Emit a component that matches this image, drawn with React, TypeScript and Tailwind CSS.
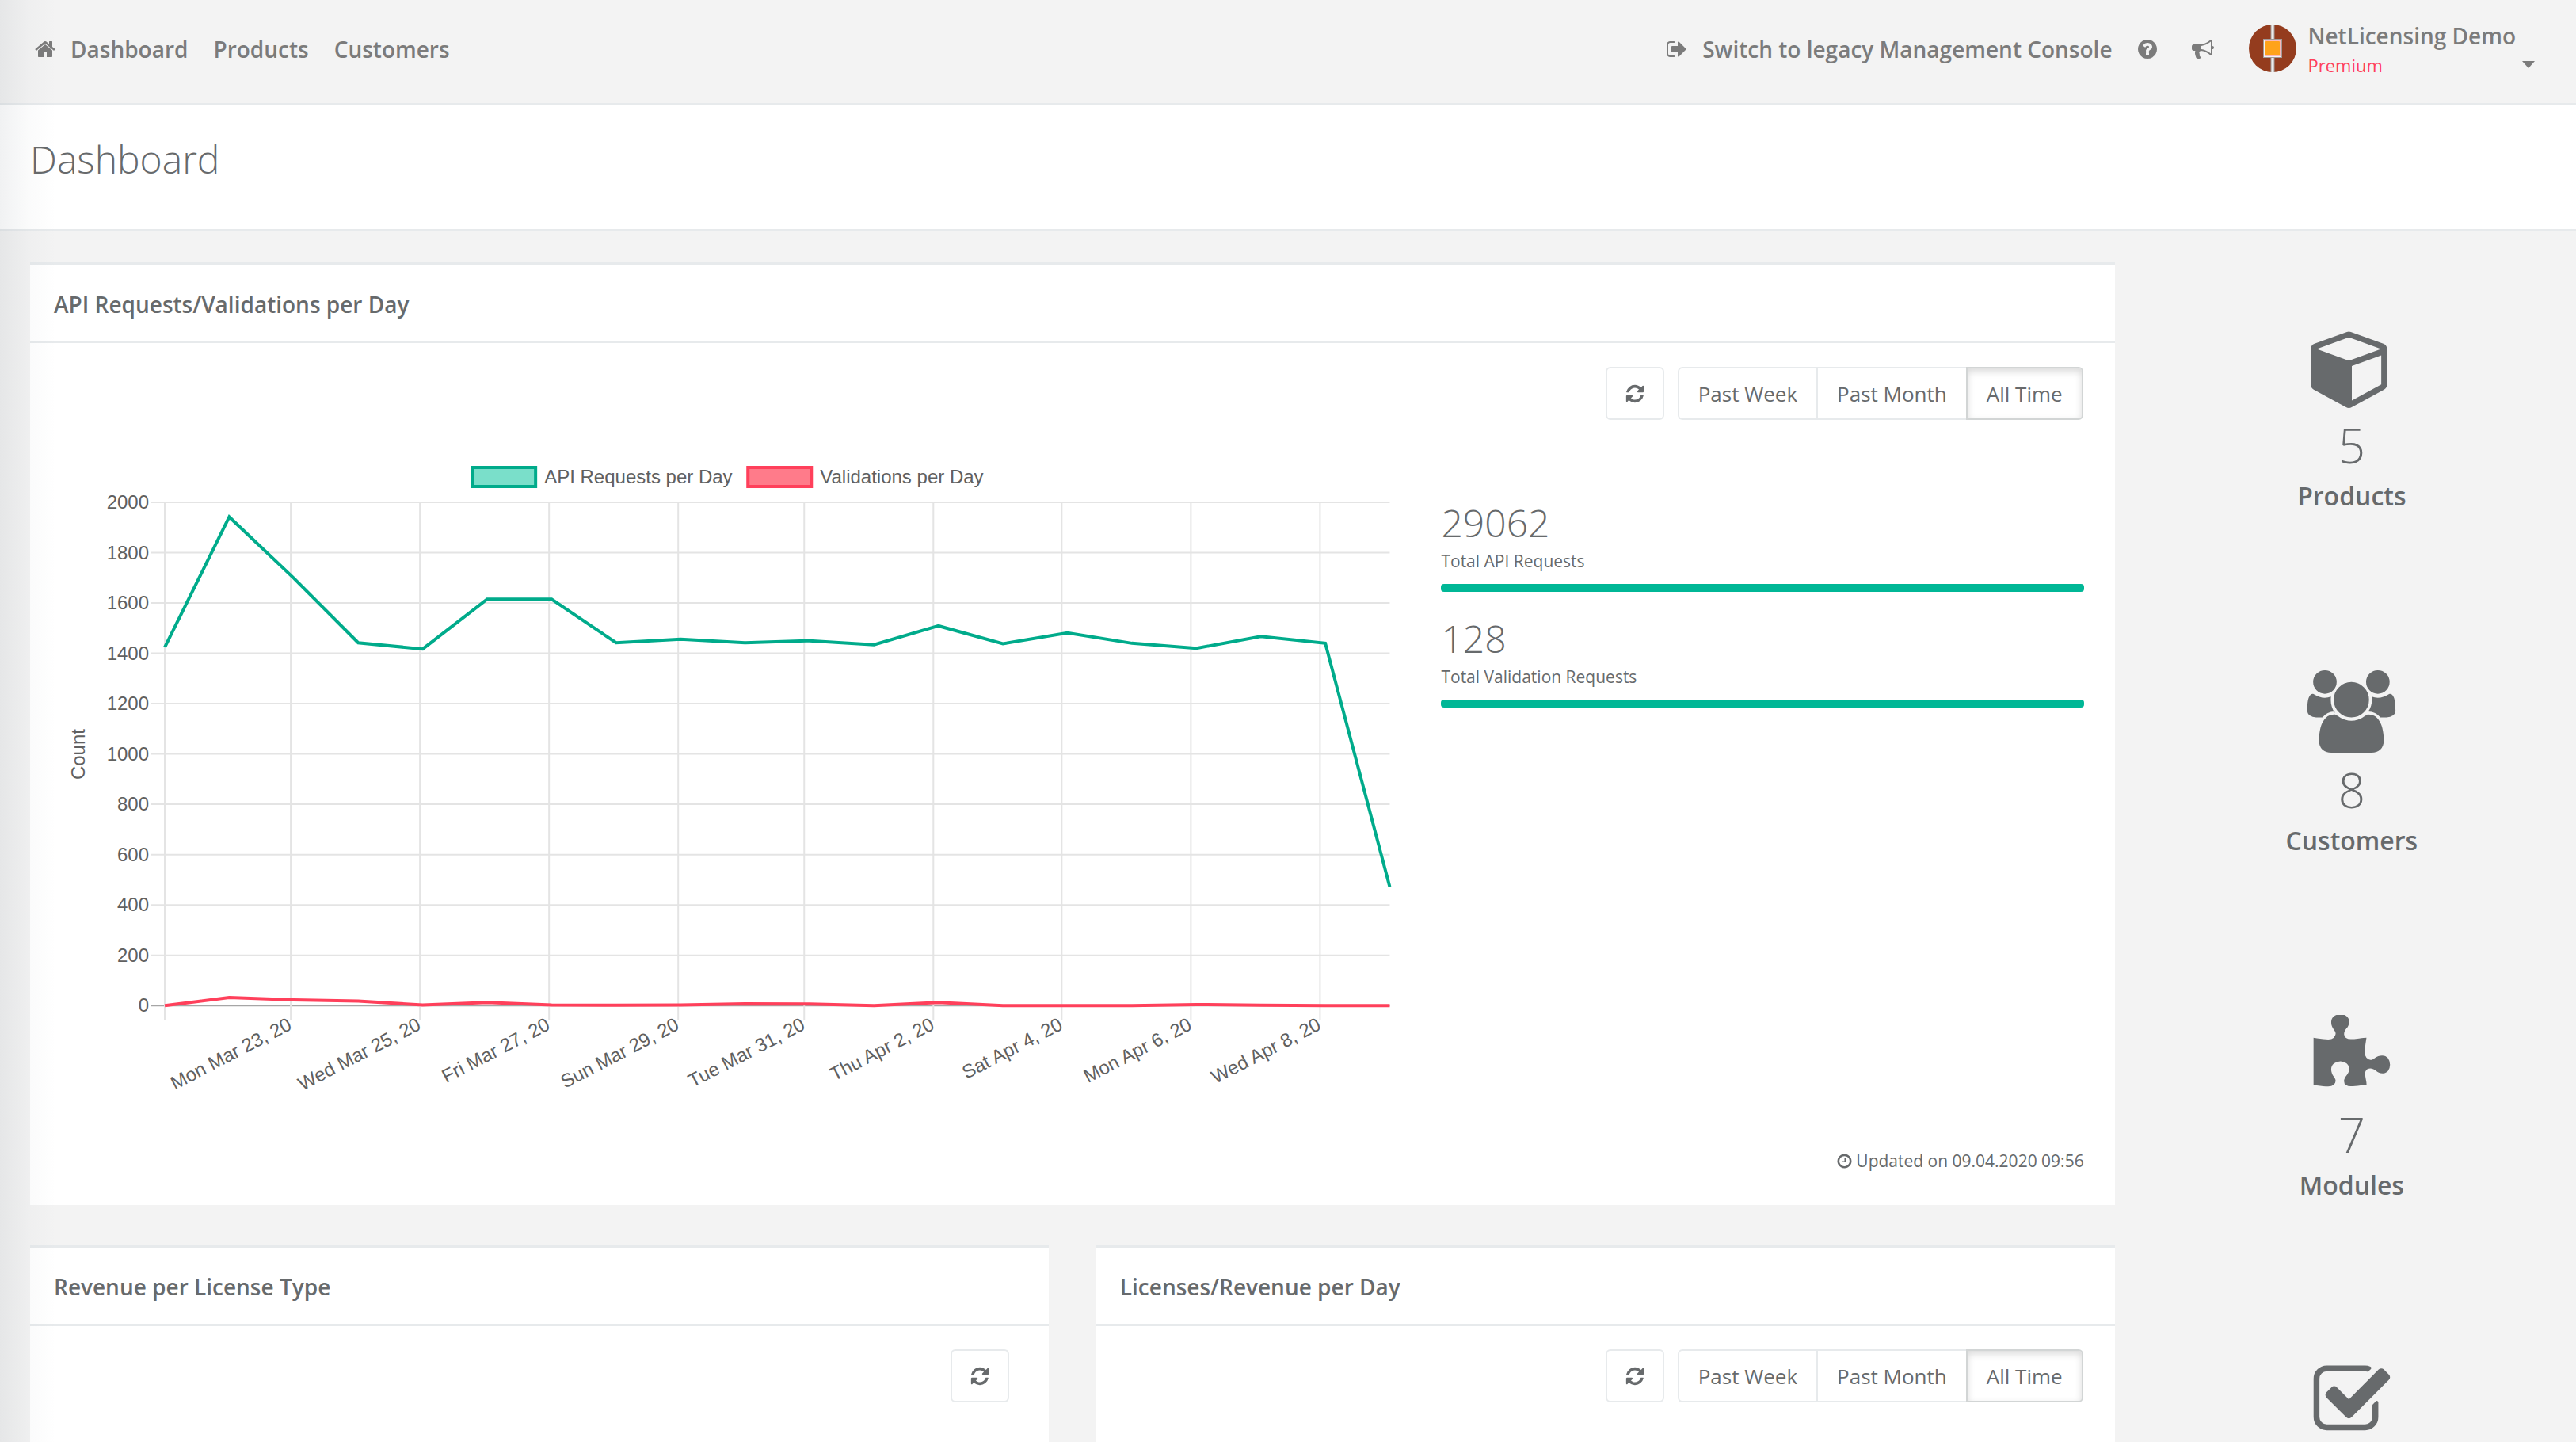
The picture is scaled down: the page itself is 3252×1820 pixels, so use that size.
import React from "react";

const icons = {
  home: "M1408 992v480q0 26-19 45t-45 19h-384v-384h-256v384h-384q-26 0-45-19t-19-45v-480q0-1 .5-3t.5-3l575-474 575 474q1 2 1 6zm223-69l-62 74q-8 9-21 11h-3q-13 0-21-7l-692-577-692 577q-12 8-24 7-13-2-21-11l-62-74q-8-10-7-23.5t11-21.5l719-599q32-26 76-26t76 26l244 204v-195q0-14 9-23t23-9h192q14 0 23 9t9 23v408l219 182q10 8 11 21.5t-7 23.5z",
  signOut:
    "M704 1440q0 4 1 20t.5 26.5-3 23.5-10 19.5-20.5 6.5h-320q-119 0-203.5-84.5t-84.5-203.5v-704q0-119 84.5-203.5t203.5-84.5h320q13 0 22.5 9.5t9.5 22.5q0 4 1 20t.5 26.5-3 23.5-10 19.5-20.5 6.5h-320q-66 0-113 47t-47 113v704q0 66 47 113t113 47h312l11.5 1 11.5 3 8 5.5 7 9 2 13.5zm928-544q0 26-19 45l-544 544q-19 19-45 19t-45-19-19-45v-288h-448q-26 0-45-19t-19-45v-384q0-26 19-45t45-19h448v-288q0-26 19-45t45-19 45 19l544 544q19 19 19 45z",
  question:
    "M1024 1376v-192q0-14-9-23t-23-9h-192q-14 0-23 9t-9 23v192q0 14 9 23t23 9h192q14 0 23-9t9-23zm256-672q0-88-55.5-163t-138.5-116-170-41q-243 0-371 213-15 24 8 42l132 100q7 6 19 6 16 0 25-12 53-68 86-92 34-24 86-24 48 0 85.5 26t37.5 59q0 38-20 61t-68 45q-63 28-115.5 86.5t-52.5 125.5v36q0 14 9 23t23 9h192q14 0 23-9t9-23q0-19 21.5-49.5t54.5-49.5q32-18 49-28.5t46-35 44.5-48 28-60.5 12.5-81zm384 192q0 209-103 385.5t-279.5 279.5-385.5 103-385.5-103-279.5-279.5-103-385.5 103-385.5 279.5-279.5 385.5-103 385.5 103 279.5 279.5 103 385.5z",
  bullhorn:
    "M1664 640q53 0 90.5 37.5t37.5 90.5-37.5 90.5-90.5 37.5v384q0 52-38 90t-90 38q-417-347-812-380-58 19-91 66t-31 100.5 40 92.5q-20 33-23 65.5t6 58 33.5 55 48 50 61.5 50.5q-29 58-111.5 83t-168.5 11.5-132-55.5q-7-23-29.5-87.5t-32-94.5-23-89-15-101 3.5-98.5 22-110.5h-122q-66 0-113-47t-47-113v-192q0-66 47-113t113-47h480q435 0 896-384 52 0 90 38t38 90v384zm-128 604v-954q-394 302-768 343v270q377 42 768 341z",
  refresh:
    "M1639 1056q0 5-1 7-64 268-268 434.5t-478 166.5q-146 0-282.5-55t-243.5-157l-129 129q-19 19-45 19t-45-19-19-45v-448q0-26 19-45t45-19h448q26 0 45 19t19 45-19 45l-137 137q71 66 161 102t187 36q134 0 250-65t186-179q11-17 53-117 8-23 30-23h192q13 0 22.5 9.5t9.5 22.5zm25-800v448q0 26-19 45t-45 19h-448q-26 0-45-19t-19-45 19-45l138-138q-148-137-349-137-134 0-250 65t-186 179q-11 17-53 117-8 23-30 23h-199q-13 0-22.5-9.5t-9.5-22.5v-7q65-268 270-434.5t480-166.5q146 0 284 55.5t245 156.5l130-129q19-19 45-19t45 19 19 45z",
  clock:
    "M1024 544v448q0 14-9 23t-23 9h-320q-14 0-23-9t-9-23v-64q0-14 9-23t23-9h224v-352q0-14 9-23t23-9h64q14 0 23 9t9 23zm416 352q0-148-73-273t-198-198-273-73-273 73-198 198-73 273 73 273 198 198 273 73 273-73 198-198 73-273zm224 0q0 209-103 385.5t-279.5 279.5-385.5 103-385.5-103-279.5-279.5-103-385.5 103-385.5 279.5-279.5 385.5-103 385.5 103 279.5 279.5 103 385.5z",
  cube: "M896 1629l640-349v-636l-640 233v752zm-64-865l698-254-698-254-698 254zm832-252v768q0 35-18 65t-49 47l-704 384q-28 16-61 16t-61-16l-704-384q-31-17-49-47t-18-65v-768q0-40 23-73t61-47l704-256q22-8 44-8t44 8l704 256q38 14 61 47t23 73z",
  users:
    "M657 896q-162 5-265 128h-134q-82 0-138-40.5t-56-118.5q0-353 124-353 6 0 43.5 21t97.5 42.5 119 21.5q67 0 133-23-5 37-5 66 0 159 93 293l-13-37zm1071 637q0 120-73 189.5t-194 69.5h-874q-121 0-194-69.5t-73-189.5q0-53 3.5-103.5t14-109 26.5-108.5 43-97.5 62-81 85.5-53.5 111.5-20q10 0 43 21.5t73 48 107 48 135 21.5 135-21.5 107-48 73-48 43-21.5q61 0 111.5 20t85.5 53.5 62 81 43 97.5 26.5 108.5 14 109 3.5 103.5zm-1024-1277q0 106-75 181t-181 75-181-75-75-181 75-181 181-75 181 75 75 181zm704 384q0 159-112.5 271.5t-271.5 112.5-271.5-112.5-112.5-271.5 112.5-271.5 271.5-112.5 271.5 112.5 112.5 271.5zm576 225q0 78-56 118.5t-138 40.5h-134q-103-123-265-128 80-114 80-256 0-29-5-66 66 23 133 23 59 0 119-21.5t97.5-42.5 43.5-21q124 0 124 353zm-128-609q0 106-75 181t-181 75-181-75-75-181 75-181 181-75 181 75 75 181z",
  puzzle:
    "M1727 1083q0 81-44.5 135t-123.5 54q-41 0-77.5-17.5t-59-38-56.5-38-71-17.5q-110 0-110 124 0 39 16 115t15 115v5q-22 0-33 1-34 3-97.5 11.5t-115.5 13.5-98 5q-61 0-103-26.5t-42-83.5q0-37 17.5-71t38-56.5 38-59 17.5-77.5q0-79-54-123.5t-135-44.5q-84 0-143 45.5t-59 127.5q0 43 15 83t33.5 64.5 33.5 53 15 50.5q0 45-46 89-37 35-117 35-95 0-245-24-9-2-27.5-4t-27.5-4l-13-2q-1 0-3-1-2 0-2-1v-1024q2 1 17.5 3.5t34 5 21.5 3.5q150 24 245 24 80 0 117-35 46-44 46-89 0-22-15-50.5t-33.5-53-33.5-64.5-15-83q0-82 59-127.5t144-45.5q80 0 134 44.5t54 123.5q0 41-17.5 77.5t-38 59-38 56.5-17.5 71q0 57 42 83.5t103 26.5q64 0 180-15t163-17v2q-1 2-3.5 17.5t-5 34-3.5 21.5q-24 150-24 245 0 80 35 117 44 46 89 46 22 0 50.5-15t53-33.5 64.5-33.5 83-15q82 0 127.5 59t45.5 143z",
  check:
    "M1472 930v318q0 119-84.5 203.5t-203.5 84.5h-832q-119 0-203.5-84.5t-84.5-203.5v-832q0-119 84.5-203.5t203.5-84.5h832q63 0 117 25 15 7 18 23 3 17-9 29l-49 49q-10 10-23 10-3 0-9-2-23-6-45-6h-832q-66 0-113 47t-47 113v832q0 66 47 113t113 47h832q66 0 113-47t47-113v-254q0-13 9-22l64-64q10-10 23-10 6 0 12 3 20 8 20 29zm231-489l-814 814q-24 24-57 24t-57-24l-430-430q-24-24-24-57t24-57l110-110q24-24 57-24t57 24l263 263 647-647q24-24 57-24t57 24l110 110q24 24 24 57t-24 57z",
};

function Icon({ name, className }: { name: keyof typeof icons; className: string }) {
  return (
    <svg
      viewBox={name === "users" ? "0 0 2048 1792" : "0 0 1792 1792"}
      className={className}
      fill="currentColor"
      aria-hidden="true"
    >
      <path d={icons[name]} />
    </svg>
  );
}

const apiRequests = [
  1424, 1942, 1699, 1442, 1417, 1615, 1615, 1442, 1456, 1442, 1450, 1434, 1509, 1438, 1481, 1440, 1420, 1467, 1440, 472,
];
const validations = [0, 32, 23, 18, 2, 12, 2, 1, 2, 7, 6, 0, 12, 0, 0, 0, 4, 1, 0, 0];
const yTicks = [0, 200, 400, 600, 800, 1000, 1200, 1400, 1600, 1800, 2000];
const xTicks = [
  { x: 290, label: "Mon Mar 23, 20" },
  { x: 453, label: "Wed Mar 25, 20" },
  { x: 616, label: "Fri Mar 27, 20" },
  { x: 779, label: "Sun Mar 29, 20" },
  { x: 938, label: "Tue Mar 31, 20" },
  { x: 1101, label: "Thu Apr 2, 20" },
  { x: 1263, label: "Sat Apr 4, 20" },
  { x: 1426, label: "Mon Apr 6, 20" },
  { x: 1589, label: "Wed Apr 8, 20" },
];

const LEFT = 131;
const RIGHT = 1677;
const TOP = 64;
const BOTTOM = 699;
const yOf = (v: number) => BOTTOM - (v / 2000) * (BOTTOM - TOP);
const line = (values: number[]) =>
  values.map((v, i) => `${LEFT + (i * (RIGHT - LEFT)) / (values.length - 1)},${yOf(v)}`).join(" ");

function RequestsChart() {
  return (
    <svg
      viewBox="0 0 1682 910"
      className="block w-full font-['Liberation_Sans',Arial,sans-serif] text-[24px]"
      fill="#606060"
      role="img"
      aria-label="API requests and validations per day"
    >
      <rect x="519" y="20" width="80" height="24" fill="#7adfca" stroke="#00ab8b" strokeWidth="4" />
      <text x="610" y="40">API Requests per Day</text>
      <rect x="867" y="20" width="80" height="24" fill="#ff7b8a" stroke="#ff405b" strokeWidth="4" />
      <text x="958" y="40">Validations per Day</text>
      {yTicks.map((t) => (
        <g key={t}>
          <line x1={LEFT - 18} x2={RIGHT} y1={yOf(t)} y2={yOf(t)} stroke={t === 0 ? "#a6a6a6" : "#e4e4e4"} strokeWidth="2" />
          <text x="111" y={yOf(t) + 8} textAnchor="end">{t}</text>
        </g>
      ))}
      <line x1={LEFT} x2={LEFT} y1={TOP} y2={BOTTOM + 18} stroke="#e4e4e4" strokeWidth="2" />
      {xTicks.map((t) => (
        <g key={t.label}>
          <line x1={t.x} x2={t.x} y1={TOP} y2={BOTTOM + 18} stroke="#e4e4e4" strokeWidth="2" />
          <text transform={`translate(${t.x - 1} ${BOTTOM + 22}) rotate(-27.5)`} y="8" textAnchor="end">
            {t.label}
          </text>
        </g>
      ))}
      <text transform="translate(30 382) rotate(-90)" textAnchor="middle">Count</text>
      <polyline points={line(apiRequests)} fill="none" stroke="#00ab8b" strokeWidth="4" />
      <polyline points={line(validations)} fill="none" stroke="#ff405b" strokeWidth="4" />
    </svg>
  );
}

function Card({ title, className = "", children }: { title: string; className?: string; children?: React.ReactNode }) {
  return (
    <section className={`border-t-4 border-[#e7eaec] bg-white ${className}`}>
      <h2 className="border-b-2 border-[#e7eaec] px-[30px] pt-[30px] pb-[28px] text-[28px] leading-[38px] font-semibold">
        {title}
      </h2>
      {children}
    </section>
  );
}

function RefreshButton() {
  return (
    <button
      type="button"
      aria-label="Refresh"
      className="flex h-[67px] w-[74px] items-center justify-center rounded-md border-2 border-[#e7eaec] bg-white"
    >
      <Icon name="refresh" className="size-[26px]" />
    </button>
  );
}

function RangeToolbar() {
  return (
    <div className="flex justify-end gap-[17px] px-10 pt-[30px]">
      <RefreshButton />
      <div className="flex h-[67px] text-[26px] leading-[38px]">
        <button type="button" className="rounded-l-md border-2 border-r-0 border-[#e7eaec] px-6">
          Past Week
        </button>
        <button type="button" className="border-2 border-r-0 border-[#e7eaec] px-6">
          Past Month
        </button>
        <button
          type="button"
          aria-pressed="true"
          className="rounded-r-md border-2 border-[#d2d5d5] px-6 shadow-[inset_0_4px_10px_rgba(0,0,0,0.15)]"
        >
          All Time
        </button>
      </div>
    </div>
  );
}

function Stat({ value, label }: { value: string; label: string }) {
  return (
    <div className="h-[146px]">
      <div className="text-[48px] leading-[54px] font-light">{value}</div>
      <div className="text-[21px] leading-[42px]">{label}</div>
      <div className="mt-2 h-[10px] rounded bg-[#00b796]" />
    </div>
  );
}

function Counter({ icon, value, label }: { icon: keyof typeof icons; value?: string; label?: string }) {
  return (
    <a href="#" className="flex h-[435px] flex-col items-center">
      <Icon name={icon} className="h-[104px] w-auto" />
      {value && <span className="mt-1 text-[60px] leading-[86px] font-light">{value}</span>}
      {label && <span className="text-[32px] leading-[42px] font-semibold">{label}</span>}
    </a>
  );
}

export default function App() {
  return (
    <div className="relative h-screen overflow-hidden bg-[#f3f3f3] font-['Open_Sans',sans-serif] text-[#676a6c]">
      <header className="flex h-[132px] items-start justify-between border-b-2 border-[#e7eaec] pr-[52px] pl-[44px] text-[28px] leading-[38px] font-semibold text-[#7b7b7b]">
        <nav className="flex gap-8 pt-[43px]">
          <a href="#" className="flex items-center gap-[17px]">
            <Icon name="home" className="size-[28px]" />
            Dashboard
          </a>
          <a href="#">Products</a>
          <a href="#">Customers</a>
        </nav>
        <div className="flex items-start">
          <div className="flex items-center pt-[43px]">
            <a href="#" className="flex items-center gap-[18px]">
              <Icon name="signOut" className="size-[28px]" />
              Switch to legacy Management Console
            </a>
            <button type="button" aria-label="Help" className="ml-[30px]">
              <Icon name="question" className="size-[28px]" />
            </button>
            <button type="button" aria-label="Announcements" className="ml-[42px]">
              <Icon name="bullhorn" className="size-[28px]" />
            </button>
          </div>
          <button type="button" className="ml-[44px] flex items-start pt-[26px] text-left">
            <svg viewBox="0 0 60 60" className="mt-[5px] size-[60px]" aria-hidden="true">
              <circle cx="30" cy="30" r="30" fill="#943c1e" />
              <path d="M30 0v60" stroke="#a09a98" strokeWidth="5" />
              <path d="M30 0v60" stroke="#ececec" strokeWidth="3" />
              <rect x="18" y="18" width="24" height="24" fill="#a09a98" />
              <rect x="19" y="19" width="22" height="22" fill="#f6f2f2" />
              <rect x="20" y="20" width="20" height="20" fill="#fbb9bb" />
              <rect x="21" y="21" width="18" height="18" rx="1" fill="#ffa31a" />
            </svg>
            <span className="ml-[15px]">
              <span className="block">NetLicensing Demo</span>
              <span className="block text-[22px] leading-[36px] font-normal text-[#ff405b]">Premium</span>
            </span>
            <svg viewBox="0 0 16 9" className="mt-[51px] ml-2 h-[9px] w-[16px]" fill="currentColor" aria-hidden="true">
              <path d="M0 0h16L8 9z" />
            </svg>
          </button>
        </div>
      </header>

      <div className="border-b-2 border-[#e7eaec] bg-white px-[38px] pt-[42px] pb-[61px]">
        <h1 className="text-[48px] leading-[54px] font-light">Dashboard</h1>
      </div>

      <div className="flex pt-10 pr-[14px] pl-2">
        <main className="w-5/6 px-[30px]">
          <Card title="API Requests/Validations per Day" className="pb-[41px]">
            <RangeToolbar />
            <div className="mt-10 grid grid-cols-3 gap-x-[60px] px-[39px]">
              <div className="col-span-2">
                <RequestsChart />
              </div>
              <div className="flex flex-col pt-[63px]">
                <Stat value="29062" label="Total API Requests" />
                <Stat value="128" label="Total Validation Requests" />
                <div className="mt-auto flex items-center justify-end gap-1 text-[21px] leading-[30px]">
                  <Icon name="clock" className="size-[21px]" />
                  Updated on 09.04.2020 09:56
                </div>
              </div>
            </div>
          </Card>
          <div className="mt-[50px] grid grid-cols-2 gap-x-[60px]">
            <Card title="Revenue per License Type" className="min-h-[800px]">
              <div className="flex justify-end pt-[30px] pr-[50px]">
                <RefreshButton />
              </div>
            </Card>
            <Card title="Licenses/Revenue per Day">
              <RangeToolbar />
            </Card>
          </div>
        </main>
        <aside className="w-1/6 pt-20">
          <Counter icon="cube" value="5" label="Products" />
          <Counter icon="users" value="8" label="Customers" />
          <Counter icon="puzzle" value="7" label="Modules" />
          <Counter icon="check" />
        </aside>
      </div>

      <div className="pointer-events-none absolute inset-y-0 left-0 w-[72px] bg-linear-to-r from-[#1a2a3a10] via-[#1a2a3a05] to-transparent" />
    </div>
  );
}
